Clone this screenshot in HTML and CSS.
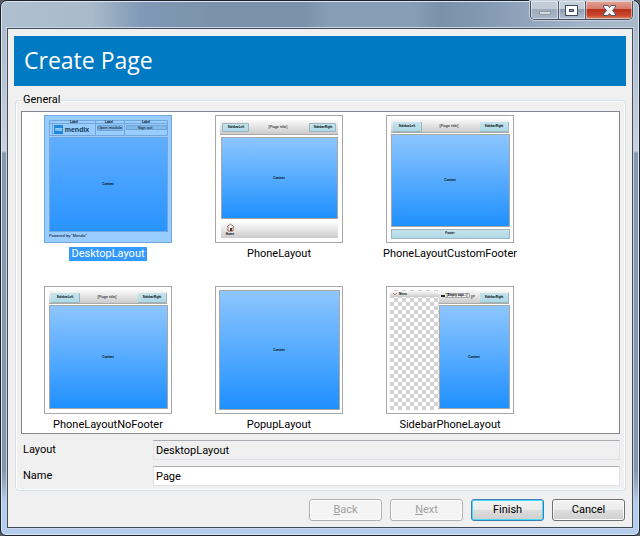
FILE: index.html
```
<!DOCTYPE html>
<html lang="en">
<head>
<meta charset="utf-8">
<title>Create Page</title>
<link rel="stylesheet" href="styles.css">
</head>
<body>
<svg class="defs" aria-hidden="true">
  <defs>
    <linearGradient id="blue" x1="0" y1="0" x2="0" y2="1"><stop offset="0" stop-color="#8ec6ff"/><stop offset="1" stop-color="#1e90ff"/></linearGradient>
    <linearGradient id="blue-selected" x1="0" y1="0" x2="0" y2="1"><stop offset="0" stop-color="#60aeff"/><stop offset="1" stop-color="#2893ff"/></linearGradient>
    <linearGradient id="grey" x1="0" y1="0" x2="0" y2="1"><stop offset="0" stop-color="#fafafa"/><stop offset="1" stop-color="#cccccc"/></linearGradient>
    <linearGradient id="teal" x1="0" y1="0" x2="0" y2="1"><stop offset="0" stop-color="#c6e5ee"/><stop offset="1" stop-color="#add8e6"/></linearGradient>
    <pattern id="checks" width="8" height="8" patternUnits="userSpaceOnUse"><path d="M0 0h8v8H0z" fill="#fff"/><path d="M4 0h4v4H4zM0 4h4v4H0z" fill="#d3d3d3"/></pattern>
    <g id="phone-header">
      <path d="M5 4h118v13H5z" fill="url(#grey)"/><path d="M5 17.500h118" stroke="#aaa"/>
      <path d="M7 7h28v9H7zM94 7h28v9H94z" fill="url(#teal)"/>
      <path d="M7 16.500h28.500V7M94 16.500h28.500V7" fill="none" stroke="#9fb5bc"/>
      <text x="21" y="12">SidebarLeft</text><text x="108" y="12">SidebarRight</text>
      <text class="light" x="63" y="12">[Page title]</text>
    </g>
  </defs>
</svg>
<main class="window">
  <header class="titlebar">
    <div class="caption-buttons">
      <button class="cap min" aria-label="Minimize" disabled><svg width="27" height="19"><rect x="8.500" y="10.500" width="11" height="3" fill="#d5dadd" stroke="#929ba2"/></svg></button>
      <button class="cap max" aria-label="Maximize"><svg width="26" height="19"><rect x="8.500" y="6.500" width="8" height="6" fill="none" stroke="#484b5c" stroke-width="5"/><rect x="8.500" y="6.500" width="8" height="6" fill="none" stroke="#fff" stroke-width="3"/></svg></button>
      <button class="cap close" aria-label="Close"><svg width="46" height="19"><path d="M17.500 4.500h4.500l1.500 2 1.500-2h4.500v1.500l-3 3.500 3 3.500v1.500H25l-1.500-2-1.500 2h-4.500V13l3-3.500-3-3.500z" fill="#f5f5f7" stroke="#535666"/></svg></button>
    </div>
  </header>
  <form class="client">
    <h1 class="banner">Create Page</h1>
    <fieldset class="general">
      <legend>General</legend>
      <div class="gallery">
        <button type="button" class="item selected" aria-pressed="true">
          <svg class="thumb" viewBox="0 0 128 128">
            <path d="M5.500 5.500h118v15H5.500zM5.500 8.500h118M8.500 8.500v12M51.500 5.500v15M80.500 5.500v15" fill="none" stroke="#72a7dd"/>
            <path d="M53.500 10.500h25v5h-25zM82.500 10.500h40v4h-40z" fill="#80b9ec" stroke="#70a4d5"/>
            <path d="M10 10h9v9h-9z" fill="#2089dc"/><text class="logo-mx" x="14.500" y="16">mx</text>
            <text class="logo" x="33" y="17">mendix</text>
            <text x="30" y="8">Label</text><text x="65" y="8">Label</text><text x="102" y="8">Label</text>
            <text class="light" x="66" y="14">Open module</text><text class="light" x="101" y="14">Sign out</text>
            <rect x="5.500" y="22.500" width="118" height="94" fill="url(#blue-selected)" stroke="#72a7dd"/>
            <text x="64" y="70">Content</text><text class="light" x="24" y="122">Powered by "Mendix"</text>
          </svg><span>DesktopLayout</span></button>
        <button type="button" class="item" aria-pressed="false">
          <svg class="thumb" viewBox="0 0 128 128">
            <path d="M5 5h118v14H5z" fill="url(#grey)"/><path d="M5 19.500h118" stroke="#aaa"/>
            <path d="M7.500 8.500h26v8h-26zM94.500 8.500h26v8h-26z" fill="url(#teal)" stroke="#9fb5bc"/>
            <text x="21" y="13">SidebarLeft</text><text x="108" y="13">SidebarRight</text><text class="light" x="63" y="13">[Page title]</text>
            <rect x="6.500" y="22.500" width="116" height="81" fill="url(#blue)" stroke="#a7a7a7"/><text x="64" y="64">Content</text>
            <path d="M6 108h117v15H6z" fill="url(#grey)"/>
            <path d="M12 112l3.500-3 3.500 3M13 112v4h5v-4" fill="#fff" stroke="#a05d50"/><path d="M15 113h2v3h-2z" fill="#573932"/><text x="15" y="120">Home</text>
          </svg><span>PhoneLayout</span></button>
        <button type="button" class="item" aria-pressed="false">
          <svg class="thumb" viewBox="0 0 128 128">
            <use href="#phone-header"/>
            <rect x="5.500" y="19.500" width="118" height="92" fill="url(#blue)" stroke="#a7a7a7"/><text x="64" y="66">Content</text>
            <rect x="5.500" y="114.500" width="118" height="9" fill="url(#teal)" stroke="#9fb5bc"/><text x="64" y="119">Footer</text>
          </svg><span>PhoneLayoutCustomFooter</span></button>
        <button type="button" class="item" aria-pressed="false">
          <svg class="thumb" viewBox="0 0 128 128">
            <use href="#phone-header"/>
            <rect x="5.500" y="19.500" width="118" height="103" fill="url(#blue)" stroke="#a7a7a7"/><text x="64" y="72">Content</text>
          </svg><span>PhoneLayoutNoFooter</span></button>
        <button type="button" class="item" aria-pressed="false">
          <svg class="thumb" viewBox="0 0 128 128">
            <rect x="4.500" y="4.500" width="120" height="119" fill="url(#blue)" stroke="#a7a7a7"/><text x="64" y="65">Content</text>
          </svg><span>PopupLayout</span></button>
        <button type="button" class="item" aria-pressed="false">
          <svg class="thumb" viewBox="0 0 128 128">
            <path d="M4 4h49v120H4z" fill="url(#checks)"/><path d="M5 5h47v6H5z" fill="url(#grey)"/>
            <path d="M7 7l2 2 2-2" fill="none" stroke="#b68165"/><text x="17" y="9">Menu</text>
            <path d="M53 4h70v13H53z" fill="url(#grey)"/><path d="M53 17.500h70" stroke="#aaa"/>
            <path d="M59 7.500h24.500v4H59" fill="#eee" stroke="#aaa"/><path d="M55 10h4" stroke="#222" stroke-width="2"/>
            <text x="71" y="10">[Empty capt...]</text><text class="light" x="87" y="12">[P</text>
            <path d="M94 7h28v9H94z" fill="url(#teal)"/><path d="M94 16.500h28.500V7" fill="none" stroke="#9fb5bc"/><text x="108" y="12">SidebarRight</text>
            <rect x="53.500" y="19.500" width="70" height="103" fill="url(#blue)" stroke="#a7a7a7"/><text x="88" y="72">Content</text>
          </svg><span>SidebarPhoneLayout</span></button>
      </div>
      <div class="field"><label for="layout">Layout</label><input id="layout" value="DesktopLayout" readonly></div>
      <div class="field"><label for="name">Name</label><input id="name" value="Page"></div>
    </fieldset>
    <footer class="actions">
      <button type="button" disabled><u>B</u>ack</button>
      <button type="button" disabled><u>N</u>ext</button>
      <button type="submit" class="default">Finish</button>
      <button type="button">Cancel</button>
    </footer>
  </form>
</main>
</body>
</html>
```
FILE: styles.css
```
* { box-sizing: border-box; }

body {
  margin: 0;
  background: #555c66;
  color: #000;
  font: 11px/14px Roboto, "Liberation Sans", sans-serif;
}

button, input { font: inherit; color: inherit; margin: 0; }

.defs { position: absolute; width: 0; height: 0; }

.window {
  min-height: 100vh;
  display: flex;
  flex-direction: column;
  padding: 0 6px 7px;
  border: 1px solid #1c222b;
  border-radius: 7px 7px 6px 6px;
  box-shadow: inset 0 0 0 1px #dce6f0;
  background:
    linear-gradient(90deg, #aebfd0 0, #a9bacb 90px, #8099b6 140px, #7b90aa 220px, #7b90aa 300px, #889eb7 330px, #889eb7 410px, #7b90a9 440px, #8298b2 75%, #a5b5c9 92%, #a9bacb 100%) top / 100% 30px no-repeat,
    linear-gradient(#a5b6c9 0, #c9d0dc 150px, #8498b0 152px, #8397ac 88%, #b3cdee 94%, #b3cdee 100%);
}

.titlebar { display: flex; justify-content: flex-end; height: 27px; flex: none; }

.caption-buttons {
  display: flex;
  height: 19px;
  border: 1px solid #454f5e;
  border-top: 0;
  border-radius: 0 0 5px 5px;
  overflow: hidden;
  box-shadow: 0 0 0 1px #c6d2df;
}

.cap { padding: 0; border: 0; display: block; box-shadow: inset 0 0 0 1px #ffffff77; }
.cap + .cap { border-left: 1px solid #505a68; }
.cap svg { display: block; }
.min { background: linear-gradient(#c1ccd6 45%, #9daaba 46%, #a9b8c9); }
.max { background: linear-gradient(#c6d0dc 45%, #8e9eb2 46%, #afc0d2); }
.close { background: linear-gradient(#e4a497 0, #d5796a 45%, #b8301b 46%, #c8462c 80%, #db8d68); }

.client {
  flex: 1;
  display: flex;
  flex-direction: column;
  padding: 7px 6px 6px;
  border: 1px solid #414b57;
  box-shadow: 0 0 0 1px #c9d6e4;
  background: #f0f0f0;
}

.banner {
  margin: 0 0 7px;
  padding: 8px 10px 10px;
  background: #007ac3;
  color: #fff;
  font: 23px/32px "Open Sans", "Noto Sans", sans-serif;
}

.general {
  min-width: 0;
  margin: 0 0 8px 1px;
  padding: 4px 5px;
  border: 1px solid #d5dfe5;
  border-radius: 4px;
  box-shadow: inset 0 0 0 1px #fff;
}
.general legend { margin: 0; padding: 0 2px; }

.gallery {
  display: grid;
  grid-template-columns: repeat(auto-fill, 128px);
  gap: 25px 43px;
  padding: 3px 22px 1px;
  border: 1px solid #828790;
  background: #fff;
}

.item {
  display: flex;
  flex-direction: column;
  align-items: center;
  gap: 4px;
  padding: 0;
  border: 0;
  background: none;
}
.item span { padding: 0 2px; white-space: nowrap; }
.selected span { background: #3399ff; color: #fff; }

.thumb {
  width: 128px;
  height: 128px;
  background: #fff;
  outline: 1px solid #a7a7a7;
  outline-offset: -1px;
}
.selected .thumb { background: #99ccff; outline-color: #72a7dd; }
.thumb text,
#phone-header text { font: bold 3px "Liberation Sans", sans-serif; text-anchor: middle; }
.thumb .light,
#phone-header .light { font-weight: normal; font-size: 4px; }
.thumb .logo { font-size: 7px; fill: #153955; }
.thumb .logo-mx { font-size: 5px; fill: #d8efff; }

.field { display: flex; align-items: center; margin-top: 6px; }
.field label { flex: 0 0 132px; padding-left: 2px; }
.field input {
  flex: 1;
  min-width: 0;
  height: 20px;
  padding: 0 2px;
  border: 1px solid #e2e3ea;
  border-top-color: #abadb3;
  background: #fff;
}
.field input:read-only { background: #f0f0f0; }

.actions { display: flex; justify-content: flex-end; gap: 8px; padding-right: 1px; }
.actions button {
  width: 73px;
  height: 22px;
  padding: 0;
  border: 1px solid #707070;
  border-radius: 3px;
  background: linear-gradient(#f2f2f2 0, #ebebeb 49%, #dddddd 50%, #cfcfcf);
  box-shadow: inset 0 0 0 1px #fcfcfc;
}
.actions button:disabled { border-color: #adb2b5; background: #f4f4f4; color: #a0a0a0; }
.actions .default { border-color: #3c7fb1; box-shadow: inset 0 0 0 1px #48d8fb; }
```
